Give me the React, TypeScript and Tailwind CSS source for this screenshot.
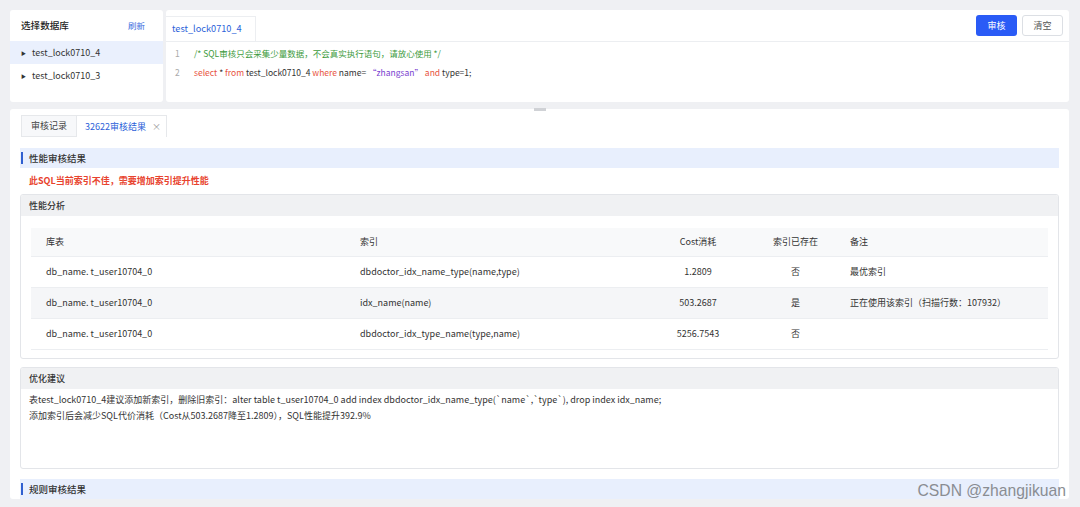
import React from 'react';

const rows = [
  { table: 'db_name. t_user10704_0', index: 'dbdoctor_idx_name_type(name,type)', cost: '1.2809', exists: '否', note: '最优索引' },
  { table: 'db_name. t_user10704_0', index: 'idx_name(name)', cost: '503.2687', exists: '是', note: '正在使用该索引（扫描行数：107932）' },
  { table: 'db_name. t_user10704_0', index: 'dbdoctor_idx_type_name(type,name)', cost: '5256.7543', exists: '否', note: '' },
];

function SectionBar({ title }: { title: string }) {
  return (
    <div className="flex h-[20px] items-center bg-[#e8effd]">
      <span className="ml-[1px] h-[12px] w-[2px] bg-[#2f5fd0]" />
      <span className="ml-[6px] text-[9.5px] font-medium text-[#333]">{title}</span>
    </div>
  );
}

function Panel({ title, children }: { title: string; children: React.ReactNode }) {
  return (
    <div className="overflow-hidden rounded-[3px] border border-[#e3e5e9] bg-white">
      <div className="flex h-[21px] items-center bg-[#f0f1f3] pl-[8px] text-[9px] font-medium text-[#333]">
        {title}
      </div>
      {children}
    </div>
  );
}

export default function App() {
  return (
    <div
      className="h-screen overflow-hidden bg-[#eff0f3] pl-[10px] pr-[11px] pt-[10px]"
      style={{ fontFamily: "'Noto Sans CJK SC', 'Noto Sans', sans-serif" }}
    >
      {/* Top: database list + editor */}
      <div className="flex h-[92px] gap-[3px]">
        <div className="w-[153px] shrink-0 overflow-hidden rounded-[3px] bg-white">
          <div className="flex h-[31px] items-center justify-between pl-[11px] pr-[18px]">
            <span className="text-[9.6px] font-medium text-[#222]">选择数据库</span>
            <span className="text-[8.5px] text-[#3e6fe0]">刷新</span>
          </div>
          <div className="flex h-[23px] items-center bg-[#eaf0fd] pl-[11px] text-[9px] text-[#333]">
            <span className="text-[5px] text-[#333]">▶</span>
            <span className="ml-[6px]">test_lock0710_4</span>
          </div>
          <div className="flex h-[23px] items-center pl-[11px] text-[9px] text-[#333]">
            <span className="text-[5px] text-[#333]">▶</span>
            <span className="ml-[6px]">test_lock0710_3</span>
          </div>
        </div>

        <div className="flex min-w-0 flex-1 flex-col overflow-hidden rounded-[3px] bg-white">
          <div className="flex h-[32px] items-end justify-between border-b border-[#eceef1]">
            <div className="flex h-[25px] w-[90px] items-center border-r border-t border-[#eceef1] pl-[6px] text-[9.2px] text-[#2b5fd9]">
              test_lock0710_4
            </div>
            <div className="mb-[5px] flex gap-[5px] pr-[6px]">
              <button className="h-[21px] w-[41px] rounded-[3px] bg-[#2a5bf6] text-[9px] text-white">审核</button>
              <button className="h-[21px] w-[41px] rounded-[3px] border border-[#dcdfe4] bg-white text-[9px] text-[#555]">清空</button>
            </div>
          </div>
          <div className="pt-[2px] text-[8.5px] leading-[19px]">
            <div className="flex">
              <span className="w-[28px] pl-[9px] text-[#aaa]">1</span>
              <span className="text-[#3c9a3c]">/* SQL审核只会采集少量数据，不会真实执行语句，请放心使用 */</span>
            </div>
            <div className="flex">
              <span className="w-[28px] pl-[9px] text-[#aaa]">2</span>
              <span className="text-[#333]">
                <span className="text-[#e8533e]">select</span> * <span className="text-[#e8533e]">from</span> test_lock0710_4{' '}
                <span className="text-[#e8533e]">where</span> name= <span className="text-[#7a3fd0]">“zhangsan”</span>{'  '}
                <span className="text-[#e8533e]">and</span> type=1;
              </span>
            </div>
          </div>
        </div>
      </div>

      {/* splitter handle */}
      <div className="flex h-[7px] items-end justify-center">
        <div className="mb-[-2px] h-[3px] w-[12px] bg-[#d0d2d6]" />
      </div>

      {/* Bottom: results */}
      <div className="rounded-[3px] bg-white px-[10px] pt-[6px]">
        <div className="flex h-[22px] items-stretch pl-[1px] text-[9px]">
          <div className="flex w-[56px] items-center justify-center border border-[#e6e8eb] bg-[#f7f8fa] text-[#444]">审核记录</div>
          <div className="flex w-[90px] items-center border-r border-t border-[#e6e8eb] pl-[8px] text-[#2b5fd9]">
            32622审核结果
            <span className="ml-[6px] text-[9px] text-[#999]">×</span>
          </div>
        </div>

        <div className="mt-[11px]">
          <SectionBar title="性能审核结果" />
          <div className="flex h-[26px] items-center pl-[9px] text-[9px] font-bold text-[#e8432e]">
            此SQL当前索引不佳，需要增加索引提升性能
          </div>

          <Panel title="性能分析">
            <div className="pb-[8px] pl-[10px] pr-[10px] pt-[12px]">
              <div className="grid h-[29px] grid-cols-[314px_305px_96px_99px_1fr] items-center border-b border-[#eceef1] bg-[#f8f9fa] text-[9px] text-[#333]">
                <div className="pl-[15px]">库表</div>
                <div className="pl-[15px]">索引</div>
                <div className="text-center">Cost消耗</div>
                <div className="text-center">索引已存在</div>
                <div className="pl-[5px]">备注</div>
              </div>
              {rows.map((r, i) => (
                <div
                  key={i}
                  className={`grid h-[31px] grid-cols-[314px_305px_96px_99px_1fr] items-center border-b border-[#eceef1] text-[9px] text-[#333] ${
                    i === 1 ? 'bg-[#f5f6f8]' : 'bg-white'
                  }`}
                >
                  <div className="pl-[15px]">{r.table}</div>
                  <div className="pl-[15px]">{r.index}</div>
                  <div className="text-center">{r.cost}</div>
                  <div className="text-center">{r.exists}</div>
                  <div className="pl-[5px]">{r.note}</div>
                </div>
              ))}
            </div>
          </Panel>

          <div className="mt-[8px]">
            <Panel title="优化建议">
              <div className="h-[79px] pl-[8px] pt-[3px] text-[9px] leading-[16px] text-[#333]">
                <div>
                  表test_lock0710_4建议添加新索引，删除旧索引：alter table t_user10704_0 add index dbdoctor_idx_name_type(`name`,`type`), drop index idx_name;
                </div>
                <div>添加索引后会减少SQL代价消耗（Cost从503.2687降至1.2809），SQL性能提升392.9%</div>
              </div>
            </Panel>
          </div>

          <div className="relative mt-[10px]">
            <SectionBar title="规则审核结果" />
            <span
              className="absolute right-[-7px] top-[4px] text-[15.7px] leading-[16px] text-[#8a8d92]"
              style={{ fontFamily: "'Liberation Sans', Arial, sans-serif" }}
            >
              CSDN @zhangjikuan
            </span>
          </div>
        </div>
      </div>
    </div>
  );
}
